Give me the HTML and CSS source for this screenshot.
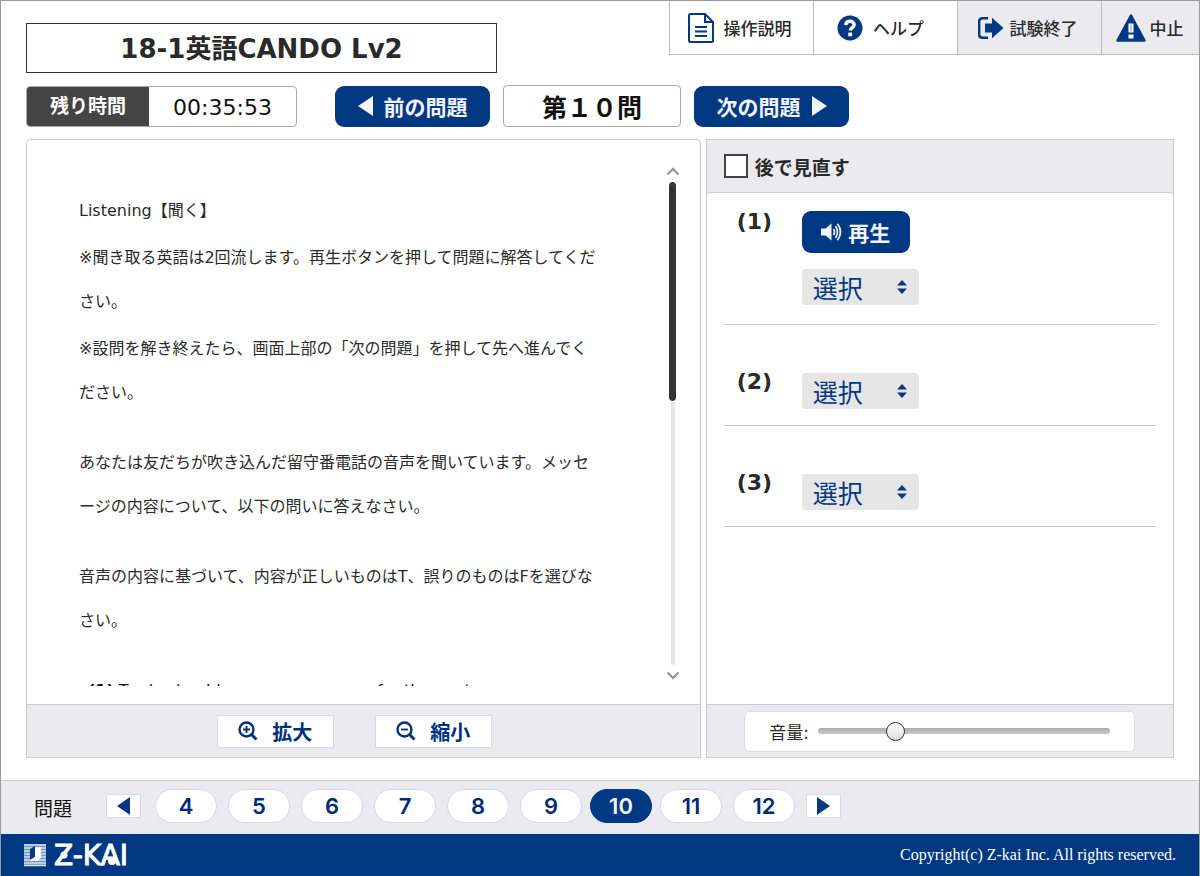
FILE: index.html
```html
<!DOCTYPE html>
<html lang="ja">
<head>
<meta charset="utf-8">
<title>18-1英語CANDO Lv2</title>
<link rel="stylesheet" href="styles.css">
</head>
<body>
<div class="page">
  <header class="top">
    <h1 class="title">18-1英語CANDO Lv2</h1>
    <nav class="tools">
      <button class="tool" type="button">
        <svg width="26" height="30" viewBox="0 0 26 30" fill="none" stroke="#003882" stroke-width="2"><path d="M17 1H2.500Q1 1 1 2.500V27.500Q1 29 2.500 29H23.500Q25 29 25 27.500V9zM17 1V9H25M7 14H19M7 18.500H19M7 23H19"/></svg>
        <span>操作説明</span>
      </button>
      <button class="tool tool-help" type="button">
        <svg width="26" height="26" viewBox="0 0 26 26"><circle cx="13" cy="13" r="12.500" fill="#003882"/><path d="M8.800 10.200C9 7.500 10.700 6.300 13 6.300C15.500 6.300 17.200 7.700 17.200 9.700C17.200 12.600 13.300 12.600 13.300 15.600" fill="none" stroke="#fff" stroke-width="3.400"/><rect x="11.300" y="17.500" width="3.800" height="3.800" rx=".6" fill="#fff"/></svg>
        <span>ヘルプ</span>
      </button>
      <button class="tool tool-gray" type="button">
        <svg width="26" height="22" viewBox="0 0 26 22"><path d="M10 1.200H4.500Q1.200 1.200 1.200 4.500V17.500Q1.200 20.800 4.500 20.800H10" fill="none" stroke="#003882" stroke-width="2.400"/><path d="M7 6.500H14V.8L25.500 11L14 21.200V15.500H7z" fill="#003882"/></svg>
        <span>試験終了</span>
      </button>
      <button class="tool tool-gray tool-stop" type="button">
        <svg width="30" height="28" viewBox="0 0 30 28"><path d="M15 1.500L28.500 26.500H1.500z" fill="#003882" stroke="#003882" stroke-width="2.500" stroke-linejoin="round"/><path d="M12.500 9.500H17.500V18.500H12.500zM12.500 20.500H17.500V24.500H12.500z" fill="#fff"/><path d="M14 10.500H16V17.500H14z" fill="#b9c6dd"/></svg>
        <span>中止</span>
      </button>
    </nav>
  </header>

  <div class="controls">
    <div class="timer"><span class="timer-label">残り時間</span><span class="timer-value">00:35:53</span></div>
    <button class="step step-prev" type="button">
      <svg width="15" height="20" viewBox="0 0 15 20"><path d="M15 0V20L0 10z" fill="#f2f4ff"/></svg>
      <span>前の問題</span>
    </button>
    <div class="current">第１０問</div>
    <button class="step" type="button">
      <span>次の問題</span>
      <svg width="15" height="20" viewBox="0 0 15 20"><path d="M0 0V20L15 10z" fill="#f2f4ff"/></svg>
    </button>
  </div>

  <main class="panels">
    <section class="panel question">
      <div class="question-body">
        <div class="passage">
          <p>Listening【聞く】</p>
          <p>※聞き取る英語は2回流します。再生ボタンを押して問題に解答してください。</p>
          <p>※設問を解き終えたら、画面上部の「次の問題」を押して先へ進んでください。</p>
          <p class="block">あなたは友だちが吹き込んだ留守番電話の音声を聞いています。メッセージの内容について、以下の問いに答えなさい。</p>
          <p class="block">音声の内容に基づいて、内容が正しいものはT、誤りのものはFを選びなさい。</p>
          <p class="block statement"><b>(1)</b> Trudy should save some money for the next</p>
        </div>
        <div class="scroll">
          <svg width="14" height="9" viewBox="0 0 14 9"><path d="M1.500 7.500L7 2L12.500 7.500" fill="none" stroke="#999" stroke-width="2.400"/></svg>
          <div class="scroll-track"><div class="scroll-thumb"></div></div>
          <svg width="14" height="9" viewBox="0 0 14 9"><path d="M1.500 1.500L7 7L12.500 1.500" fill="none" stroke="#999" stroke-width="2.400"/></svg>
        </div>
      </div>
      <div class="panel-foot zoom-bar">
        <button class="zoom" type="button">
          <svg width="20" height="20" viewBox="0 0 20 20" fill="none" stroke="#003080"><circle cx="8.500" cy="8.500" r="7" stroke-width="2.400"/><path d="M13.500 13.500L18.500 18.500" stroke-width="3"/><path d="M5 8.500H12M8.500 5V12" stroke-width="1.800"/></svg>
          <span>拡大</span>
        </button>
        <button class="zoom" type="button">
          <svg width="20" height="20" viewBox="0 0 20 20" fill="none" stroke="#003080"><circle cx="8.500" cy="8.500" r="7" stroke-width="2.400"/><path d="M13.500 13.500L18.500 18.500" stroke-width="3"/><path d="M5 8.500H12" stroke-width="1.800"/></svg>
          <span>縮小</span>
        </button>
      </div>
    </section>

    <section class="panel answers">
      <label class="review"><input class="review-box" type="checkbox">後で見直す</label>
      <div class="answer-list">
        <div class="answer answer-audio">
          <label class="answer-no" for="a1">(1)</label>
          <div class="answer-fields">
            <button class="play" type="button">
              <svg width="22" height="18" viewBox="0 0 22 18"><path d="M0 5.500H4.500L10.500 .5V17.500L4.500 12.500H0z" fill="#f2f4ff"/><path d="M12.500 6Q14.500 9 12.500 12M14.500 3Q18.500 9 14.500 15M16.500 .8Q22.500 9 16.500 17.200" fill="none" stroke="#f2f4ff" stroke-width="1.700"/></svg>
              <span>再生</span>
            </button>
            <div class="pick"><select id="a1"><option>選択</option><option>T</option><option>F</option></select><svg class="pick-arrows" width="10" height="14" viewBox="0 0 10 14"><path d="M5 0L10 5.500H0zM0 8.500H10L5 14z" fill="#003882"/></svg></div>
          </div>
        </div>
        <div class="answer">
          <label class="answer-no" for="a2">(2)</label>
          <div class="pick"><select id="a2"><option>選択</option><option>T</option><option>F</option></select><svg class="pick-arrows" width="10" height="14" viewBox="0 0 10 14"><path d="M5 0L10 5.500H0zM0 8.500H10L5 14z" fill="#003882"/></svg></div>
        </div>
        <div class="answer">
          <label class="answer-no" for="a3">(3)</label>
          <div class="pick"><select id="a3"><option>選択</option><option>T</option><option>F</option></select><svg class="pick-arrows" width="10" height="14" viewBox="0 0 10 14"><path d="M5 0L10 5.500H0zM0 8.500H10L5 14z" fill="#003882"/></svg></div>
        </div>
      </div>
      <div class="panel-foot volume-bar">
        <div class="volume"><label for="vol">音量:</label><input id="vol" class="slider" type="range" min="0" max="100" value="25"></div>
      </div>
    </section>
  </main>

  <nav class="pager">
    <span class="pager-label">問題</span>
    <button class="pager-arrow" type="button" aria-label="前へ"><svg width="13" height="18" viewBox="0 0 13 18"><path d="M13 0V18L0 9z" fill="#003882"/></svg></button>
    <button class="pill" type="button">4</button>
    <button class="pill" type="button">5</button>
    <button class="pill" type="button">6</button>
    <button class="pill" type="button">7</button>
    <button class="pill" type="button">8</button>
    <button class="pill" type="button">9</button>
    <button class="pill pill-on" type="button">10</button>
    <button class="pill" type="button">11</button>
    <button class="pill" type="button">12</button>
    <button class="pager-arrow" type="button" aria-label="次へ"><svg width="13" height="18" viewBox="0 0 13 18"><path d="M0 0V18L13 9z" fill="#003882"/></svg></button>
  </nav>

  <footer class="footer">
    <svg class="logo" width="116" height="24" viewBox="0 0 116 24">
      <rect x="0" y="1" width="22" height="22" fill="#6f93bf"/>
      <path d="M0 2H22M0 5H22M0 8H22M0 11H22M0 14H22M0 17H22M0 20H22M0 22.500H22" stroke="#d5e1ee" stroke-width="1.400"/>
      <path d="M11 4H17V15L11 16z" fill="#fff"/><path d="M6 6L11 3V14L6 17z" fill="#003882"/><path d="M6 17L11 14H17L14 18H6z" fill="#fff"/>
      <text class="logo-text" x="30" y="22">Z-KAI</text>
      <circle cx="40" cy="12" r="3.500" fill="#fff"/><circle cx="88" cy="18" r="4" fill="#fff"/>
    </svg>
    <small class="copyright">Copyright(c) Z-kai Inc. All rights reserved.</small>
  </footer>
</div>
</body>
</html>
```
FILE: styles.css
```css
* { box-sizing: border-box; }
body, h1, p { margin: 0; }
body {
  font-family: "DejaVu Sans", "Noto Sans CJK JP", sans-serif;
  font-size: 16px;
  color: #2a2a2a;
  background: #fff;
}
button, select, input { font: inherit; color: inherit; margin: 0; padding: 0; }
button {
  display: flex;
  align-items: center;
  justify-content: center;
  border: 0;
  background: none;
  font-family: "Noto Sans CJK JP", sans-serif;
  font-weight: 500;
}
svg { display: block; flex: none; }
.page {
  display: flex;
  flex-direction: column;
  height: 100vh;
  min-height: 720px;
  border: 1px solid #999;
  border-bottom: 0;
}
.top, .controls, .pager, .footer { flex: none; }

.top { display: flex; justify-content: space-between; align-items: flex-start; padding-left: 25px; }
.title {
  flex: 0 1 471px;
  margin-top: 22px;
  padding-top: 2px;
  border: 1px solid #333;
  font-size: 26px;
  line-height: 46px;
  text-align: center;
}
.tools { display: flex; border-bottom: 1px solid #bbb; }
.tool {
  width: 144px;
  height: 53px;
  gap: 10px;
  padding-right: 4px;
  border-left: 1px solid #bbb;
  font-size: 17px;
}
.tool-help { padding-right: 10px; }
.tool-gray { gap: 6px; background: #ebeaef; }
.tool-stop { width: 98px; gap: 4px; padding-right: 2px; }

.controls { display: flex; align-items: center; padding: 12px 25px; }
.timer {
  display: flex;
  width: 271px;
  height: 41px;
  margin-right: 38px;
  border: 1px solid #aaa;
  border-radius: 4px;
  overflow: hidden;
  line-height: 39px;
  text-align: center;
}
.timer-label { width: 122px; background: #444; color: #fff; font-size: 19px; font-weight: 700; }
.timer-value { flex: 1; font-size: 22px; line-height: 41px; color: #111; }
.step {
  width: 155px;
  height: 41px;
  gap: 11px;
  border-radius: 9px;
  background: #003882;
  color: #f2f4ff;
  font-size: 21px;
  font-weight: 700;
}
.current {
  width: 178px;
  margin: 0 13px;
  border: 1px solid #aaa;
  border-radius: 4px;
  font: 700 25px/40px "Noto Sans CJK JP", sans-serif;
  text-align: center;
  color: #111;
}

.panels { flex: 1; min-height: 0; display: flex; gap: 5px; padding: 0 25px 22px; }
.panel { display: flex; flex-direction: column; border: 1px solid #ccc; }
.question { flex: 675; min-width: 0; border-radius: 4px 4px 0 0; }
.answers { flex: 468; min-width: 0; background: #ebeaef; }
.question-body { flex: 1; display: flex; min-height: 0; padding: 27px 20px 18px 52px; }
.passage { flex: 1; overflow: hidden; margin-right: 63px; padding-top: 22px; line-height: 44px; line-break: loose; }
.passage p { margin-bottom: 3px; }
.passage .block { margin-top: 26px; margin-bottom: 0; }
.passage .statement { padding-left: 9px; color: #111; }
.scroll { display: flex; flex-direction: column; align-items: center; gap: 6px; width: 14px; padding-bottom: 6px; }
.scroll-track { flex: 1; width: 4px; border-radius: 2px; background: #e6e6e6; }
.scroll-thumb { width: 7px; height: 219px; margin-left: -2px; border-radius: 3px; background: #333; outline: 1px solid #fff; }
.panel-foot { flex: none; height: 53px; display: flex; align-items: center; justify-content: center; border-top: 1px solid #ccc; background: #ebeaef; }
.zoom-bar { gap: 41px; padding-right: 18px; }
.zoom {
  width: 117px;
  height: 33px;
  gap: 14px;
  border: 1px solid #d3dbe6;
  background: #fff;
  color: #003080;
  font-size: 20px;
  font-weight: 700;
}

.review {
  display: flex;
  align-items: center;
  gap: 7px;
  height: 52px;
  padding: 0 17px;
  font: 700 19px "Noto Sans CJK JP", sans-serif;
}
.review-box { appearance: none; width: 24px; height: 24px; border: 2px solid #444; background: #fff; }
.answer-list { flex: 1; padding: 0 17px; border-top: 1px solid #ccc; border-radius: 4px 4px 0 0; background: #fff; }
.answer { display: flex; padding: 48px 0 16px; border-bottom: 1px solid #ccc; }
.answer-audio { padding: 18px 0 19px; }
.answer-no { width: 78px; padding-left: 13px; font-size: 22px; line-height: 22px; font-weight: 700; }
.answer > .answer-no { margin-top: -2px; }
.answer-audio > .answer-no { margin-top: 0; }
.play {
  width: 108px;
  height: 42px;
  margin-bottom: 16px;
  gap: 5px;
  border-radius: 9px;
  background: #003882;
  color: #f2f4ff;
  font-size: 21px;
  font-weight: 700;
}
.pick { position: relative; width: 117px; height: 36px; }
.pick select {
  appearance: none;
  width: 100%;
  height: 100%;
  padding: 0 11px 4px;
  border: 0;
  border-radius: 4px;
  background: #e6e6e6;
  color: #003882;
  font: 400 25px "Noto Sans CJK JP", sans-serif;
}
.pick-arrows { position: absolute; right: 12px; top: 11px; pointer-events: none; }
.volume {
  display: flex;
  align-items: center;
  gap: 9px;
  width: 391px;
  height: 41px;
  padding: 0 24px;
  border: 1px solid #dcdce0;
  border-radius: 5px;
  background: #fff;
  font-size: 17px;
}
.slider { appearance: none; flex: 1; min-width: 0; height: 20px; background: none; }
.slider::-webkit-slider-runnable-track { height: 6px; border-radius: 3px; background: linear-gradient(#aaa, #c8c8c8); }
.slider::-webkit-slider-thumb {
  appearance: none;
  width: 19px;
  height: 19px;
  margin-top: -6px;
  border: 1px solid #333;
  border-radius: 50%;
  background: linear-gradient(#fff, #ddd);
}

.pager {
  display: flex;
  align-items: center;
  gap: 11px;
  height: 54px;
  padding: 0 33px 4px;
  border-top: 1px solid #ccc;
  background: #ebeaef;
}
.pager-label { width: 61px; padding-top: 4px; font-size: 19px; color: #111; }
.pager-arrow { width: 35px; height: 24px; border: 1px solid #d3dbe6; background: #fff; }
.pager-arrow:nth-child(2) { margin-right: 3px; }
.pill {
  width: 62px;
  height: 34px;
  border: 1px solid #d3dbe6;
  border-radius: 17px;
  background: #fff;
  color: #002878;
  font: 600 22px Inter, sans-serif;
}
.pill-on { margin: 0 -3px; background: #003882; border-color: #003882; color: #f2f4ff; }

.footer {
  display: flex;
  align-items: center;
  justify-content: space-between;
  height: 42px;
  padding: 0 23px;
  background: #003882;
  color: #fff;
}
.logo-text { font: 28px "DejaVu Sans", sans-serif; fill: #fff; stroke: #fff; }
.copyright { font: 16px "Liberation Serif", serif; }
```
